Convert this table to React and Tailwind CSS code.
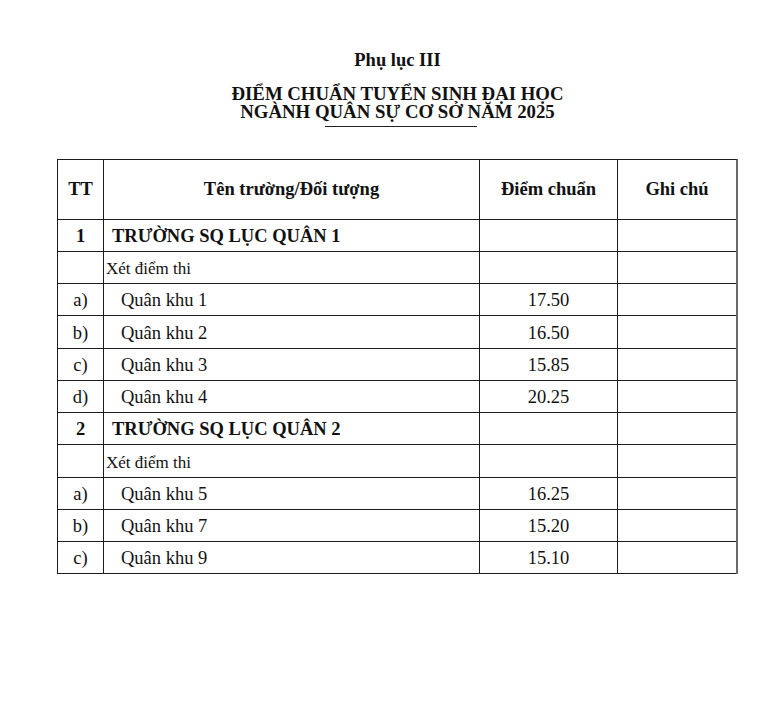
import React from "react";

const rows = [
  { tt: "1", name: "TRƯỜNG SQ LỤC QUÂN 1", type: "school" },
  { tt: "", name: "Xét điểm thi", type: "sub" },
  { tt: "a)", name: "Quân khu 1", score: "17.50" },
  { tt: "b)", name: "Quân khu 2", score: "16.50" },
  { tt: "c)", name: "Quân khu 3", score: "15.85" },
  { tt: "d)", name: "Quân khu 4", score: "20.25" },
  { tt: "2", name: "TRƯỜNG SQ LỤC QUÂN 2", type: "school" },
  { tt: "", name: "Xét điểm thi", type: "sub" },
  { tt: "a)", name: "Quân khu 5", score: "16.25" },
  { tt: "b)", name: "Quân khu 7", score: "15.20" },
  { tt: "c)", name: "Quân khu 9", score: "15.10" },
];

const cell = "border-r border-b border-[#1c1c1c] flex items-center";

export default function App() {
  return (
    <div
      className="w-[777px] h-[718px] bg-white text-[#111]"
      style={{ fontFamily: '"Liberation Serif", "Times New Roman", serif' }}
    >
      <div className="ml-[57px] w-[681px] pt-[49px]">
        <div className="text-center font-bold text-[18.5px] leading-[22px]">Phụ lục III</div>
        <div className="mt-[13.5px] text-center font-bold text-[18.8px] leading-[18.5px]">
          <div>ĐIỂM CHUẨN TUYỂN SINH ĐẠI HỌC</div>
          <div>
            NGÀNH{" "}
            <span className="relative">
              QUÂN SỰ CƠ SỞ
              <span className="absolute left-[10px] right-[-14px] bottom-[-5px] h-[1.5px] bg-[#222]"></span>
            </span>{" "}
            NĂM 2025
          </div>
        </div>
        <div className="mt-[37px] grid grid-cols-[46px_376px_138px_118px] grid-rows-[60px_repeat(11,32.27px)] border-t border-l border-[#1c1c1c] border-r-2 border-r-[#6a6a6a]">
          <div className={`${cell} justify-center font-bold text-[18.5px] pt-[1px]`}>TT</div>
          <div className={`${cell} justify-center font-bold text-[18.5px] pt-[1px]`}>Tên trường/Đối tượng</div>
          <div className={`${cell} justify-center font-bold text-[18.5px] pt-[1px]`}>Điểm chuẩn</div>
          <div className="border-b border-[#1c1c1c] flex items-center justify-center font-bold text-[18.5px] pt-[1px]">Ghi chú</div>
          {rows.map((r, i) => (
            <React.Fragment key={i}>
              <div
                className={`${cell} justify-center text-[18.5px] pt-[3px] ${r.type === "school" ? "font-bold" : ""}`}
              >
                {r.tt}
              </div>
              <div
                className={`${cell} pt-[3px] ${
                  r.type === "school"
                    ? "font-bold text-[18.5px] pl-[8px]"
                    : r.type === "sub"
                    ? "text-[17px] pl-[2px]"
                    : "text-[18.5px] pl-[17px]"
                }`}
              >
                {r.name}
              </div>
              <div className={`${cell} justify-center text-[18.5px] pt-[3px]`}>{r.score || ""}</div>
              <div className="border-b border-[#1c1c1c]"></div>
            </React.Fragment>
          ))}
        </div>
      </div>
    </div>
  );
}
